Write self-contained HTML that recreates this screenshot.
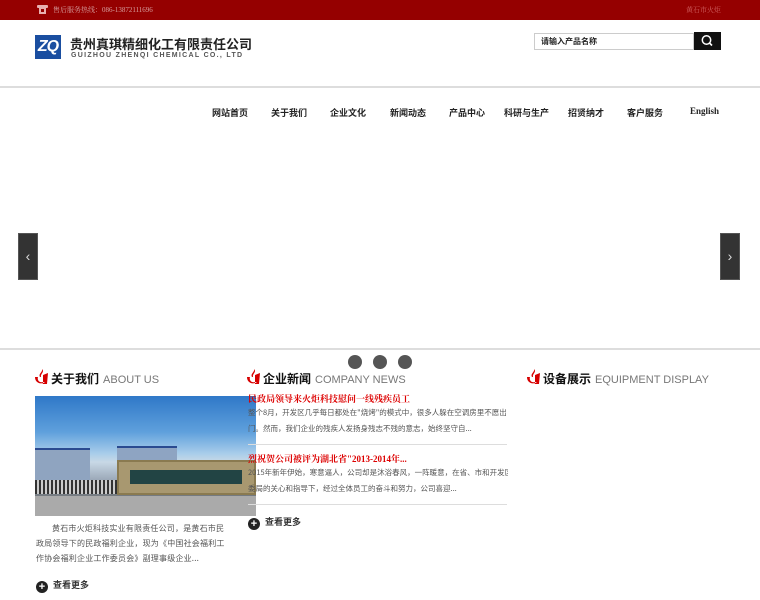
<!DOCTYPE html>
<html><head><meta charset="utf-8">
<style>
*{margin:0;padding:0;box-sizing:border-box}
body{width:760px;height:600px;overflow:hidden;background:#fff;font-family:"Liberation Serif","Noto Serif CJK SC","Noto Sans CJK SC",serif;position:relative;color:#333}
.abs{position:absolute}
.top{left:0;top:0;width:760px;height:20px;background:#950000}
.top .t{left:53px;top:5px;font-size:7px;color:#d8a0a0;white-space:nowrap}
.top .r{left:686px;top:5px;font-size:7px;color:#d06060}
.logo{left:35px;top:35px;width:26px;height:24px;background:#1a4ea0;color:#fff;font:italic bold 16px/24px "Liberation Sans",sans-serif;text-align:center;letter-spacing:-1px}
.cn{left:70px;top:35px;font:bold 13px/17px "Noto Sans CJK SC",sans-serif;color:#222;white-space:nowrap}
.en{left:71px;top:52px;font:bold 7px "Liberation Sans",sans-serif;color:#555;letter-spacing:1.3px;white-space:nowrap}
.search{left:534px;top:33px;width:160px;height:17px;border:1px solid #ccc;font:bold 8px/15px "Noto Sans CJK SC",sans-serif;padding-left:6px;color:#222}
.sbtn{left:694px;top:32px;width:27px;height:18px;background:#111}
.hline{left:0;top:86px;width:760px;height:2px;background:#ddd}
.nav{top:106px;font:bold 9px "Noto Sans CJK SC",sans-serif;color:#222;white-space:nowrap}
.arr{top:233px;width:20px;height:47px;background:#333;border:1px solid #555;color:#ddd;font:14px/45px "Liberation Sans",sans-serif;text-align:center}
.bline{left:0;top:348px;width:760px;height:2px;background:#ddd}
.dot{top:355px;width:14px;height:14px;border-radius:50%;background:#555}
.h{top:370px;font:bold 12px "Noto Sans CJK SC",sans-serif;color:#111;white-space:nowrap}
.h span{font:11px "Liberation Sans",sans-serif;color:#777;font-weight:normal;margin-left:4px}
.fl{top:369px;width:14px;height:16px}
.photo{left:35px;top:396px;width:221px;height:120px;background:linear-gradient(#2f78c8 0%,#5fa0dc 30%,#a9cdea 48%,#c8d8e6 55%,#8c98a8 75%,#6a6e70 86%,#9a9a9a 90%,#b5b5b5 100%);overflow:hidden}
.p{font:7.5px/16px "Noto Sans CJK SC",sans-serif;color:#555}
.red{font:bold 9px "Liberation Serif","Noto Serif CJK SC",serif;color:#d00;white-space:nowrap}
.more{font:bold 9px "Noto Sans CJK SC",sans-serif;color:#333}
.more i{display:inline-block;width:12px;height:12px;border-radius:50%;background:#222;color:#fff;font:bold 11px/12px "Liberation Sans";text-align:center;vertical-align:-2px;margin-right:5px;font-style:normal}
.sep{height:1px;background:#ddd;width:259px}
</style></head><body>
<div class="abs top">
 <svg class="abs" style="left:37px;top:5px" width="11" height="9" viewBox="0 0 11 9"><rect x="0" y="0" width="11" height="3" rx="1" fill="#e8b0b0"/><rect x="2" y="3" width="7" height="6" fill="#e8b0b0"/><rect x="4" y="4" width="3" height="3" fill="#950000"/></svg>
 <div class="abs t">售后服务热线：086-13872111696</div>
 <div class="abs r">黄石市火炬</div>
</div>
<div class="abs logo">ZQ</div>
<div class="abs cn">贵州真琪精细化工有限责任公司</div>
<div class="abs en">GUIZHOU ZHENQI CHEMICAL CO., LTD</div>
<div class="abs search">请输入产品名称</div>
<div class="abs sbtn"><svg width="27" height="18"><circle cx="12.5" cy="8" r="4.2" stroke="#fff" stroke-width="1.5" fill="none"/><line x1="15.5" y1="11" x2="18" y2="13.5" stroke="#fff" stroke-width="1.6"/></svg></div>
<div class="abs hline"></div>
<div class="abs nav" style="left:212px">网站首页</div>
<div class="abs nav" style="left:271px">关于我们</div>
<div class="abs nav" style="left:330px">企业文化</div>
<div class="abs nav" style="left:390px">新闻动态</div>
<div class="abs nav" style="left:449px">产品中心</div>
<div class="abs nav" style="left:504px">科研与生产</div>
<div class="abs nav" style="left:568px">招贤纳才</div>
<div class="abs nav" style="left:627px">客户服务</div>
<div class="abs nav" style="left:690px;font-family:'Liberation Serif',serif">English</div>
<div class="abs arr" style="left:18px">&lsaquo;</div>
<div class="abs arr" style="left:720px">&rsaquo;</div>
<div class="abs bline"></div>
<div class="abs dot" style="left:348px"></div>
<div class="abs dot" style="left:373px"></div>
<div class="abs dot" style="left:398px"></div>

<svg class="abs fl" style="left:35px" viewBox="0 0 14 16"><path d="M7 0 C10 3 5 5 6 8 L5 8 C3 5 8 3 7 0Z M0 8 C0 14 6 16 10 13 L8 13 C4 14 2 11 3 8Z M8 6 L13 4 L12 15 L8 15Z" fill="#d60000"/></svg>
<div class="abs h" style="left:51px">关于我们<span>ABOUT US</span></div>
<svg class="abs fl" style="left:247px" viewBox="0 0 14 16"><path d="M7 0 C10 3 5 5 6 8 L5 8 C3 5 8 3 7 0Z M0 8 C0 14 6 16 10 13 L8 13 C4 14 2 11 3 8Z M8 6 L13 4 L12 15 L8 15Z" fill="#d60000"/></svg>
<div class="abs h" style="left:263px">企业新闻<span>COMPANY NEWS</span></div>
<svg class="abs fl" style="left:527px" viewBox="0 0 14 16"><path d="M7 0 C10 3 5 5 6 8 L5 8 C3 5 8 3 7 0Z M0 8 C0 14 6 16 10 13 L8 13 C4 14 2 11 3 8Z M8 6 L13 4 L12 15 L8 15Z" fill="#d60000"/></svg>
<div class="abs h" style="left:543px">设备展示<span>EQUIPMENT DISPLAY</span></div>

<div class="abs photo">
 <div class="abs" style="left:0;top:52px;width:55px;height:40px;background:#8fa4c0;border-top:2px solid #2a4a90"></div>
 <div class="abs" style="left:82px;top:50px;width:60px;height:30px;background:#8ea4c2;border-top:2px solid #2a4a90"></div>
 <div class="abs" style="left:0;top:84px;width:90px;height:14px;background:repeating-linear-gradient(90deg,#333 0 2px,#ccc 2px 4px)"></div>
 <div class="abs" style="left:82px;top:64px;width:139px;height:35px;background:#a89870;border:2px solid #8a7a50"></div>
 <div class="abs" style="left:95px;top:74px;width:112px;height:14px;background:#244;"></div>
 <div class="abs" style="left:0;top:100px;width:221px;height:20px;background:#aaa"></div>
</div>
<div class="abs p" style="left:36px;top:521px;width:196px;font-size:8px;line-height:15px;text-indent:16px;letter-spacing:0.2px">黄石市火炬科技实业有限责任公司，是黄石市民政局领导下的民政福利企业，现为《中国社会福利工作协会福利企业工作委员会》副理事级企业...</div>
<div class="abs more" style="left:36px;top:578px"><i>+</i>查看更多</div>

<div class="abs red" style="left:248px;top:392px">民政局领导来火炬科技慰问一线残疾员工</div>
<div class="abs p" style="left:248px;top:405px;width:260px;white-space:nowrap;overflow:hidden">整个8月，开发区几乎每日都处在"烧烤"的模式中，很多人躲在空调房里不愿出<br>门。然而，我们企业的残疾人发扬身残志不残的意志，始终坚守自...</div>
<div class="abs sep" style="left:248px;top:444px"></div>
<div class="abs red" style="left:248px;top:452px">烈祝贺公司被评为湖北省"2013-2014年...</div>
<div class="abs p" style="left:248px;top:465px;width:260px;white-space:nowrap;overflow:hidden">2015年新年伊始，寒意逼人，公司却是沐浴春风，一阵暖意，在省、市和开发区工<br>委局的关心和指导下，经过全体员工的奋斗和努力，公司喜迎...</div>
<div class="abs sep" style="left:248px;top:504px"></div>
<div class="abs more" style="left:248px;top:515px"><i>+</i>查看更多</div>
</body></html>
